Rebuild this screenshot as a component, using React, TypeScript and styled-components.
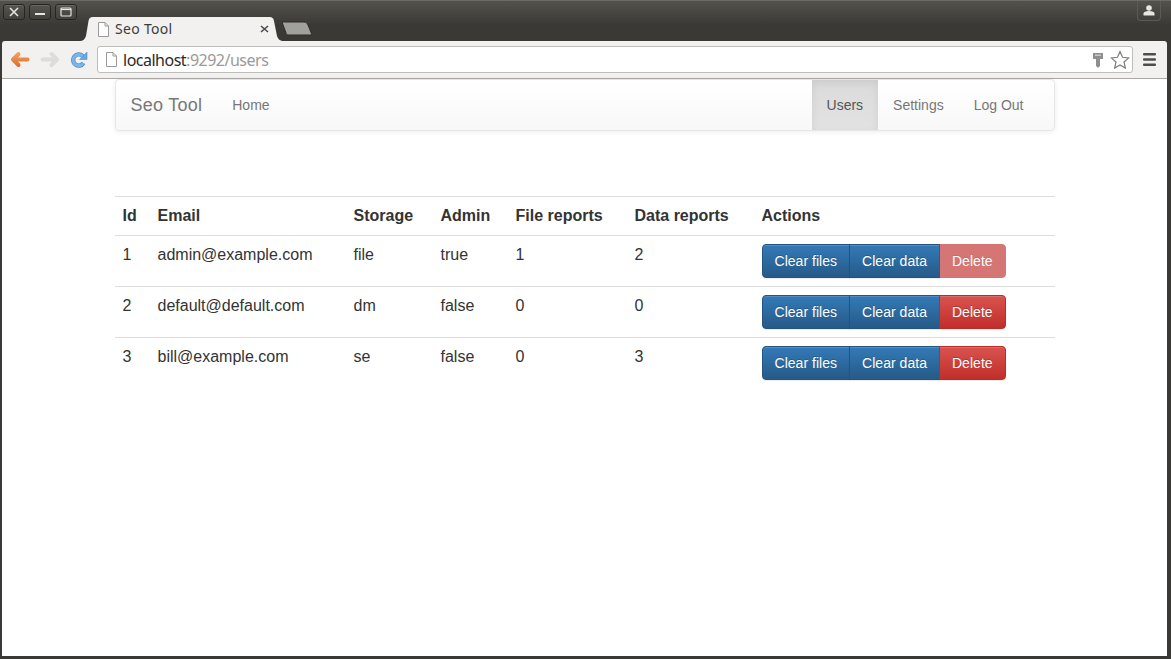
import React from 'react';
import styled, { createGlobalStyle } from 'styled-components';

const GlobalStyle = createGlobalStyle`
  html, body {
    margin: 0;
    height: 100%;
    overflow: hidden;
    background: #3a3935;
  }
  * { box-sizing: border-box; }
`;

const Window = styled.div`
  width: 1171px;
  height: 659px;
  display: flex;
  flex-direction: column;
  padding: 0 4px 3px 2px;
  background: #3a3935;
  border-top: 1px solid #6b6a66;
  font-family: "Liberation Sans", Arial, sans-serif;
`;

const TitleBar = styled.div`
  height: 40px;
  margin: 0 -4px 0 -2px;
  padding: 3px 10px 0 3px;
  display: flex;
  align-items: flex-start;
  background: linear-gradient(#53524d, #3a3935 60%);
`;

const WindowButtons = styled.div`
  display: flex;
  gap: 4px;
`;

const WindowButton = styled.div`
  width: 22px;
  height: 16px;
  display: flex;
  align-items: center;
  justify-content: center;
  border: 1px solid #26251f;
  border-radius: 3px;
  background: linear-gradient(#55544f, #42413c);
  box-shadow: inset 0 1px 0 rgba(255, 255, 255, 0.12);
  color: #e8e6e0;
`;

const Tabs = styled.div`
  display: flex;
  align-items: flex-end;
  align-self: flex-end;
  margin-left: 3px;
  flex: 1;
`;

const Tab = styled.div`
  position: relative;
  width: 204px;
  height: 24px;
  padding-left: 17px;
  display: flex;
  align-items: center;
  gap: 5px;
`;

const TabShape = styled.svg`
  position: absolute;
  inset: 0;
`;

const TabIcon = styled.svg`
  position: relative;
  flex: none;
`;

const TabTitle = styled.span`
  position: relative;
  width: 140px;
  margin-top: -2px;
  font: 14px "Noto Sans", sans-serif;
  letter-spacing: 0.3px;
  color: #3c3c3c;
`;

const TabClose = styled.svg`
  position: relative;
`;

const NewTab = styled.svg`
  margin: 0 0 5px -3px;
`;

const ProfileButton = styled.div`
  width: 24px;
  height: 20px;
  margin-top: -3px;
  display: flex;
  align-items: center;
  justify-content: center;
  border: 1px solid #5c5b56;
  border-top: 0;
  border-radius: 0 0 4px 4px;
`;

const Toolbar = styled.div`
  height: 38px;
  padding: 5px 11px 0 8px;
  display: flex;
  align-items: flex-start;
  background: #f2f1f0;
  border-bottom: 1px solid #a9a8a6;
  border-radius: 3px 3px 0 0;
`;

const NavIcons = styled.div`
  width: 87px;
  height: 27px;
  display: flex;
  align-items: center;
`;

const Omnibox = styled.div`
  flex: 1;
  height: 27px;
  padding: 0 2px 0 7px;
  display: flex;
  align-items: center;
  background: #fff;
  border: 1px solid #bdbdbb;
  border-radius: 3px;
`;

const Url = styled.span`
  flex: 1;
  margin-left: 5px;
  font: 16px "Noto Sans", sans-serif;
  letter-spacing: -0.5px;
  color: #9a9a9a;
`;

const UrlHost = styled.span`
  color: #2a2a2a;
`;

const MenuButton = styled.svg`
  margin: 7px 0 0 10px;
`;

const Page = styled.div`
  flex: 1;
  background: #fff;
  padding: 0 112.5px;
  font-size: 14px;
  line-height: 20px;
  color: #333;
`;

const Navbar = styled.nav`
  height: 52px;
  display: flex;
  justify-content: space-between;
  margin-bottom: 65px;
  padding-right: 15px;
  border: 1px solid #e7e7e7;
  border-radius: 4px;
  background: linear-gradient(#fff, #f8f8f8);
  box-shadow: inset 0 1px 0 rgba(255, 255, 255, 0.15), 0 1px 5px rgba(0, 0, 0, 0.075);
`;

const NavGroup = styled.div`
  display: flex;
`;

const Brand = styled.a`
  padding: 15px;
  font-size: 18px;
  letter-spacing: 0.25px;
  color: #777;
`;

const NavLink = styled.a<{ $active?: boolean }>`
  padding: 15px;
  color: ${p => (p.$active ? '#555' : '#777')};
  background: ${p => (p.$active ? 'linear-gradient(#dbdbdb, #e2e2e2)' : 'none')};
  box-shadow: ${p => (p.$active ? 'inset 0 3px 9px rgba(0, 0, 0, 0.075)' : 'none')};
`;

const Table = styled.table`
  width: 940px;
  border-collapse: collapse;
  table-layout: fixed;
  font-size: 16px;
  line-height: 22.86px;
`;

const HeadCell = styled.th`
  padding: 8px;
  line-height: 22px;
  text-align: left;
  font-weight: 700;
  border-top: 1px solid #ddd;
  border-bottom: 1px solid #ddd;
`;

const Cell = styled.td`
  padding: 8px;
  vertical-align: top;
  border-bottom: 1px solid #ddd;

  tr:last-child > & {
    border-bottom: 0;
  }
`;

const ButtonGroup = styled.div`
  display: flex;
`;

const Button = styled.button<{ $danger?: boolean; $disabled?: boolean }>`
  height: 34px;
  margin-left: -1px;
  padding: 6px 12px;
  font: 14px/20px "Liberation Sans", Arial, sans-serif;
  letter-spacing: 0.03px;
  color: #fff;
  text-shadow: 0 -1px 0 rgba(0, 0, 0, 0.2);
  border: 1px solid ${p => (p.$disabled ? '#c12e2a' : p.$danger ? '#b92c28' : '#245580')};
  background: ${p =>
    p.$disabled
      ? '#c12e2a'
      : p.$danger
        ? 'linear-gradient(#d9534f, #c12e2a)'
        : 'linear-gradient(#337ab7, #265a88)'};
  box-shadow: ${p =>
    p.$disabled ? 'none' : 'inset 0 1px 0 rgba(255, 255, 255, 0.15), 0 1px 1px rgba(0, 0, 0, 0.075)'};
  opacity: ${p => (p.$disabled ? 0.65 : 1)};

  &:first-child {
    margin-left: 0;
    border-radius: 4px 0 0 4px;
  }

  &:last-child {
    border-radius: 0 4px 4px 0;
  }
`;

const DocIcon = () => (
  <TabIcon width="13" height="15" viewBox="0 0 13 15" fill="#fdfdfd" stroke="#9a9a9a">
    <path d="M1.5.5h6.5l3.5 3.5v10.500h-10z" />
    <path d="M8 .5V4h3.5" fill="none" />
  </TabIcon>
);

const users = [
  { id: 1, email: 'admin@example.com', storage: 'file', admin: 'true', files: 1, data: 2, locked: true },
  { id: 2, email: 'default@default.com', storage: 'dm', admin: 'false', files: 0, data: 0 },
  { id: 3, email: 'bill@example.com', storage: 'se', admin: 'false', files: 0, data: 3 },
];

export default function App() {
  return (
    <>
      <GlobalStyle />
      <Window>
        <TitleBar>
          <WindowButtons>
            <WindowButton>
              <svg width="10" height="10" viewBox="0 0 10 10" stroke="currentColor" strokeWidth="1.6">
                <path d="M1 1l8 8M9 1l-8 8" />
              </svg>
            </WindowButton>
            <WindowButton>
              <svg width="10" height="10" viewBox="0 0 10 10" stroke="currentColor" strokeWidth="2">
                <path d="M0 7h10" />
              </svg>
            </WindowButton>
            <WindowButton>
              <svg width="12" height="10" viewBox="0 0 12 10" fill="none" stroke="currentColor" strokeWidth="1.2">
                <rect x="1" y="1" width="10" height="8" rx="1" />
                <path d="M1 2.500h10" />
              </svg>
            </WindowButton>
          </WindowButtons>
          <Tabs>
            <Tab>
              <TabShape width="204" height="24" viewBox="0 0 204 24">
                <path d="M0 24c3 0 5-2 6-5l2.500-15c.5-3 2-4 4-4H190c2 0 3.500 1 4 4l3 15c1 3 3 5 7 5z" fill="#f2f1f0" />
              </TabShape>
              <DocIcon />
              <TabTitle>Seo Tool</TabTitle>
              <TabClose width="9" height="8" viewBox="0 0 9 8" stroke="#4a4a4a" strokeWidth="1.6">
                <path d="M1 1l7 6M8 1l-7 6" />
              </TabClose>
            </Tab>
            <NewTab width="32" height="15" viewBox="0 0 32 15">
              <path d="M1 1h22c2 0 3 1 4 3l4 10H7c-1 0-2-1-2-2L1 1z" fill="#a0a09c" stroke="#2d2c28" />
            </NewTab>
          </Tabs>
          <ProfileButton>
            <svg width="12" height="11" viewBox="0 0 12 11" fill="#e8e6e0">
              <circle cx="6" cy="3" r="2.800" />
              <path d="M0.500 10.500v-2c0-1.500 2-2.500 5.500-2.500s5.500 1 5.500 2.500v2z" />
            </svg>
          </ProfileButton>
        </TitleBar>
        <Toolbar>
          <NavIcons>
            <svg width="20" height="17" viewBox="0 0 20 17" fill="none" strokeLinecap="round" strokeLinejoin="round" strokeWidth="4">
              <defs>
                <linearGradient id="back" gradientUnits="userSpaceOnUse" x1="0" y1="1" x2="0" y2="16">
                  <stop offset="0" stopColor="#f3a45e" />
                  <stop offset="1" stopColor="#df6a2c" />
                </linearGradient>
              </defs>
              <path d="M8.500 3L3 8.500l5.500 5.500M3.500 8.500H17.500" stroke="url(#back)" />
            </svg>
            <svg width="20" height="17" viewBox="0 0 20 17" fill="none" stroke="#dcdcda" strokeLinecap="round" strokeLinejoin="round" strokeWidth="4" style={{ marginLeft: 10 }}>
              <path d="M11.500 3L17 8.500 11.500 14M16.500 8.500H2.500" />
            </svg>
            <svg width="18" height="17" viewBox="0 0 18 17" style={{ marginLeft: 10 }}>
              <path d="M13.500 12a5.600 5.600 0 1 1-.8-7" fill="none" stroke="#4f8fce" strokeWidth="4.400" />
              <path d="M13.500 12a5.600 5.600 0 1 1-.8-7" fill="none" stroke="#7db4e6" strokeWidth="3" />
              <path d="M17 1v7.500H9.500z" fill="#6aa5dd" stroke="#4f8fce" strokeWidth="0.600" />
            </svg>
          </NavIcons>
          <Omnibox>
            <DocIcon />
            <Url>
              <UrlHost>localhost</UrlHost>:9292/users
            </Url>
            <svg width="10" height="16" viewBox="0 0 10 16" fill="#8f8f8d">
              <path d="M0 1h10v6H7v7l-1.500 1.500h-1L3 14V7H0z" />
              <rect x="2" y="2.500" width="6" height="1.500" fill="#c8c8c6" />
            </svg>
            <svg width="20" height="19" viewBox="0 0 20 19" fill="#fff" stroke="#7f7f7d" strokeWidth="1.200" style={{ marginLeft: 7 }}>
              <path d="M10 1.500l2.500 5.800 6.200.6-4.700 4.100 1.400 6.100L10 15l-5.400 3.100L6 12 1.300 7.900l6.200-.6z" />
            </svg>
          </Omnibox>
          <MenuButton width="13" height="13" viewBox="0 0 13 13" fill="#4d4d4b">
            <rect width="13" height="2.600" rx="1" />
            <rect y="5.200" width="13" height="2.600" rx="1" />
            <rect y="10.400" width="13" height="2.600" rx="1" />
          </MenuButton>
        </Toolbar>
        <Page>
          <Navbar>
            <NavGroup>
              <Brand>Seo Tool</Brand>
              <NavLink>Home</NavLink>
            </NavGroup>
            <NavGroup>
              <NavLink $active>Users</NavLink>
              <NavLink>Settings</NavLink>
              <NavLink>Log Out</NavLink>
            </NavGroup>
          </Navbar>
          <Table>
            <colgroup>
              <col width="35" />
              <col width="196" />
              <col width="87" />
              <col width="75" />
              <col width="119" />
              <col width="127" />
              <col width="301" />
            </colgroup>
            <thead>
              <tr>
                <HeadCell>Id</HeadCell>
                <HeadCell>Email</HeadCell>
                <HeadCell>Storage</HeadCell>
                <HeadCell>Admin</HeadCell>
                <HeadCell>File reports</HeadCell>
                <HeadCell>Data reports</HeadCell>
                <HeadCell>Actions</HeadCell>
              </tr>
            </thead>
            <tbody>
              {users.map(user => (
                <tr key={user.id}>
                  <Cell>{user.id}</Cell>
                  <Cell>{user.email}</Cell>
                  <Cell>{user.storage}</Cell>
                  <Cell>{user.admin}</Cell>
                  <Cell>{user.files}</Cell>
                  <Cell>{user.data}</Cell>
                  <Cell>
                    <ButtonGroup>
                      <Button>Clear files</Button>
                      <Button>Clear data</Button>
                      <Button $danger $disabled={user.locked}>Delete</Button>
                    </ButtonGroup>
                  </Cell>
                </tr>
              ))}
            </tbody>
          </Table>
        </Page>
      </Window>
    </>
  );
}
